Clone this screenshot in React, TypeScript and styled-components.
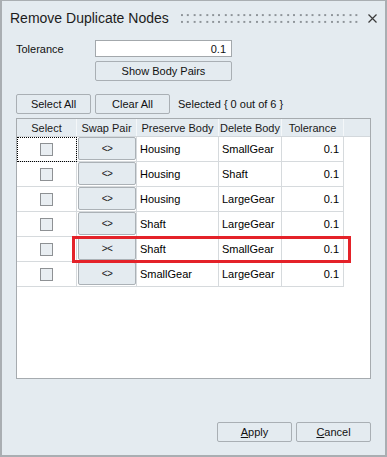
import React from "react";
import styled, { createGlobalStyle } from "styled-components";

const Global = createGlobalStyle`
  html, body { margin: 0; padding: 0; background: #ffffff; }
  body { font-family: "Liberation Sans", Arial, sans-serif; }
  * { box-sizing: border-box; }
`;

const Window = styled.div`
  width: 387px;
  height: 457px;
  background: #e4ebf0;
  border: 2px solid #a9aeb2;
  border-top-width: 1px;
  display: flex;
  flex-direction: column;
  color: #111;
  font-size: 11px;
`;

const TitleBar = styled.div`
  height: 34px;
  display: flex;
  align-items: center;
  padding: 0 8px 0 8px;
`;

const Title = styled.div`
  font-size: 14px;
  color: #1c1c1c;
  white-space: nowrap;
`;

const Grip = styled.svg`
  flex: 1;
  height: 9px;
  margin-left: 12px;
  margin-top: 1px;
`;

const CloseIcon = styled.svg`
  width: 9px;
  height: 9px;
  margin-left: 8px;
  margin-top: 1px;
`;

const Form = styled.div`
  display: flex;
  flex-direction: column;
  padding: 5px 14px 0 14px;
`;

const FieldRow = styled.div`
  display: flex;
  align-items: center;
  height: 17px;
`;

const FieldLabel = styled.div`
  width: 79px;
  font-size: 11px;
  color: #111;
`;

const NumberInput = styled.div`
  width: 137px;
  height: 17px;
  background: #ffffff;
  border: 1px solid #a3a8ac;
  display: flex;
  align-items: center;
  justify-content: flex-end;
  padding-right: 5px;
  font-size: 11px;
`;

const Button = styled.div<{ $width: number }>`
  width: ${(p) => p.$width}px;
  height: 20px;
  border: 1px solid #a9afb4;
  border-radius: 2px;
  background: #e4ebf0;
  display: flex;
  align-items: center;
  justify-content: center;
  font-size: 11px;
  color: #111;
  flex-shrink: 0;
`;

const IndentedButton = styled(Button)`
  margin-left: 79px;
  margin-top: 4px;
`;

const ActionRow = styled.div`
  display: flex;
  align-items: center;
  gap: 4px;
  margin-top: 13px;
`;

const Status = styled.div`
  margin-left: 4px;
  font-size: 11px;
  color: #111;
`;

const Grid = styled.div`
  position: relative;
  margin-top: 4px;
  width: 355px;
  height: 261px;
  border: 1px solid #a6abaf;
  background: #ffffff;
  display: flex;
  flex-direction: column;
`;

const columns = "60px 60px 82px 63px 62px 1fr";

const HeaderRow = styled.div`
  display: grid;
  grid-template-columns: ${columns};
  height: 18px;
  background: #e4ebf0;
  border-bottom: 1px solid #d3d8dc;
`;

const HeaderCell = styled.div<{ $last?: boolean }>`
  display: flex;
  align-items: center;
  justify-content: center;
  font-size: 11px;
  color: #1a1a1a;
  white-space: nowrap;
  border-right: ${(p) => (p.$last ? "none" : "1px solid #f4f7f9")};
`;

const DataRow = styled.div`
  display: grid;
  grid-template-columns: ${columns};
  height: 25px;
`;

const Cell = styled.div<{ $align?: "left" | "right" | "center"; $focus?: boolean }>`
  display: flex;
  align-items: center;
  justify-content: ${(p) =>
    p.$align === "right" ? "flex-end" : p.$align === "center" ? "center" : "flex-start"};
  padding: ${(p) => (p.$align === "right" ? "0 4px 0 0" : p.$align === "center" ? "0" : "0 0 0 3px")};
  border-right: 1px solid #d6dadd;
  border-bottom: 1px solid #d6dadd;
  font-size: 11px;
  color: #000;
  white-space: nowrap;
  outline: ${(p) => (p.$focus ? "1px dotted #000" : "none")};
  outline-offset: -1px;
`;

const SwapCell = styled.div`
  display: flex;
  padding: 0 0 1px 1px;
  border-right: 1px solid #d6dadd;
  border-bottom: 1px solid #d6dadd;
`;

const SwapButton = styled.div`
  flex: 1;
  border: 1px solid #abb1b6;
  border-radius: 2px;
  background: #e4ebf0;
  display: flex;
  align-items: center;
  justify-content: center;
  font-size: 10px;
  color: #1a1a1a;
  letter-spacing: -0.5px;
`;

const Filler = styled.div``;

const Checkbox = styled.span`
  width: 13px;
  height: 13px;
  border: 1px solid #8e9194;
  background: #e9eef2;
  display: block;
`;

const Highlight = styled.div`
  position: absolute;
  left: 55px;
  top: 117px;
  width: 279px;
  height: 27px;
  border: 3px solid #e42229;
  pointer-events: none;
`;

const Footer = styled.div`
  margin-top: auto;
  display: flex;
  justify-content: flex-end;
  gap: 4px;
  padding: 0 14px 13px 14px;
`;

const AccessKey = styled.span`
  text-decoration: underline;
`;

type Pair = { preserve: string; remove: string; swapped?: boolean };

const pairs: Pair[] = [
  { preserve: "Housing", remove: "SmallGear" },
  { preserve: "Housing", remove: "Shaft" },
  { preserve: "Housing", remove: "LargeGear" },
  { preserve: "Shaft", remove: "LargeGear" },
  { preserve: "Shaft", remove: "SmallGear", swapped: true },
  { preserve: "SmallGear", remove: "LargeGear" },
];

const dots = Array.from({ length: 29 }, (_, i) => Math.round(i * 6.4));

export default function App() {
  return (
    <>
      <Global />
      <Window>
        <TitleBar>
          <Title>Remove Duplicate Nodes</Title>
          <Grip viewBox="0 0 184 9" preserveAspectRatio="xMinYMid meet">
            {dots.map((x) => (
              <React.Fragment key={x}>
                <rect x={x} y={0} width={2} height={2} fill="#8d9398" />
                <rect x={x} y={7} width={2} height={2} fill="#8d9398" />
              </React.Fragment>
            ))}
          </Grip>
          <CloseIcon viewBox="0 0 9 9">
            <path d="M0.5 0.5 L8.5 8.5 M8.5 0.5 L0.5 8.5" stroke="#3a3a3a" strokeWidth="1.2" fill="none" />
          </CloseIcon>
        </TitleBar>
        <Form>
          <FieldRow>
            <FieldLabel>Tolerance</FieldLabel>
            <NumberInput>0.1</NumberInput>
          </FieldRow>
          <IndentedButton $width={137}>Show Body Pairs</IndentedButton>
          <ActionRow>
            <Button $width={75}>Select All</Button>
            <Button $width={75}>Clear All</Button>
            <Status>Selected {"{"} 0 out of 6 {"}"}</Status>
          </ActionRow>
          <Grid>
            <HeaderRow>
              <HeaderCell>Select</HeaderCell>
              <HeaderCell>Swap Pair</HeaderCell>
              <HeaderCell>Preserve Body</HeaderCell>
              <HeaderCell>Delete Body</HeaderCell>
              <HeaderCell>Tolerance</HeaderCell>
              <HeaderCell $last />
            </HeaderRow>
            {pairs.map((p, i) => (
              <DataRow key={i}>
                <Cell $align="center" $focus={i === 0}>
                  <Checkbox />
                </Cell>
                <SwapCell>
                  <SwapButton>{p.swapped ? "><" : "<>"}</SwapButton>
                </SwapCell>
                <Cell>{p.preserve}</Cell>
                <Cell>{p.remove}</Cell>
                <Cell $align="right">0.1</Cell>
                <Filler />
              </DataRow>
            ))}
            <Highlight />
          </Grid>
        </Form>
        <Footer>
          <Button $width={75}>
            <AccessKey>A</AccessKey>pply
          </Button>
          <Button $width={75}>
            <AccessKey>C</AccessKey>ancel
          </Button>
        </Footer>
      </Window>
    </>
  );
}
